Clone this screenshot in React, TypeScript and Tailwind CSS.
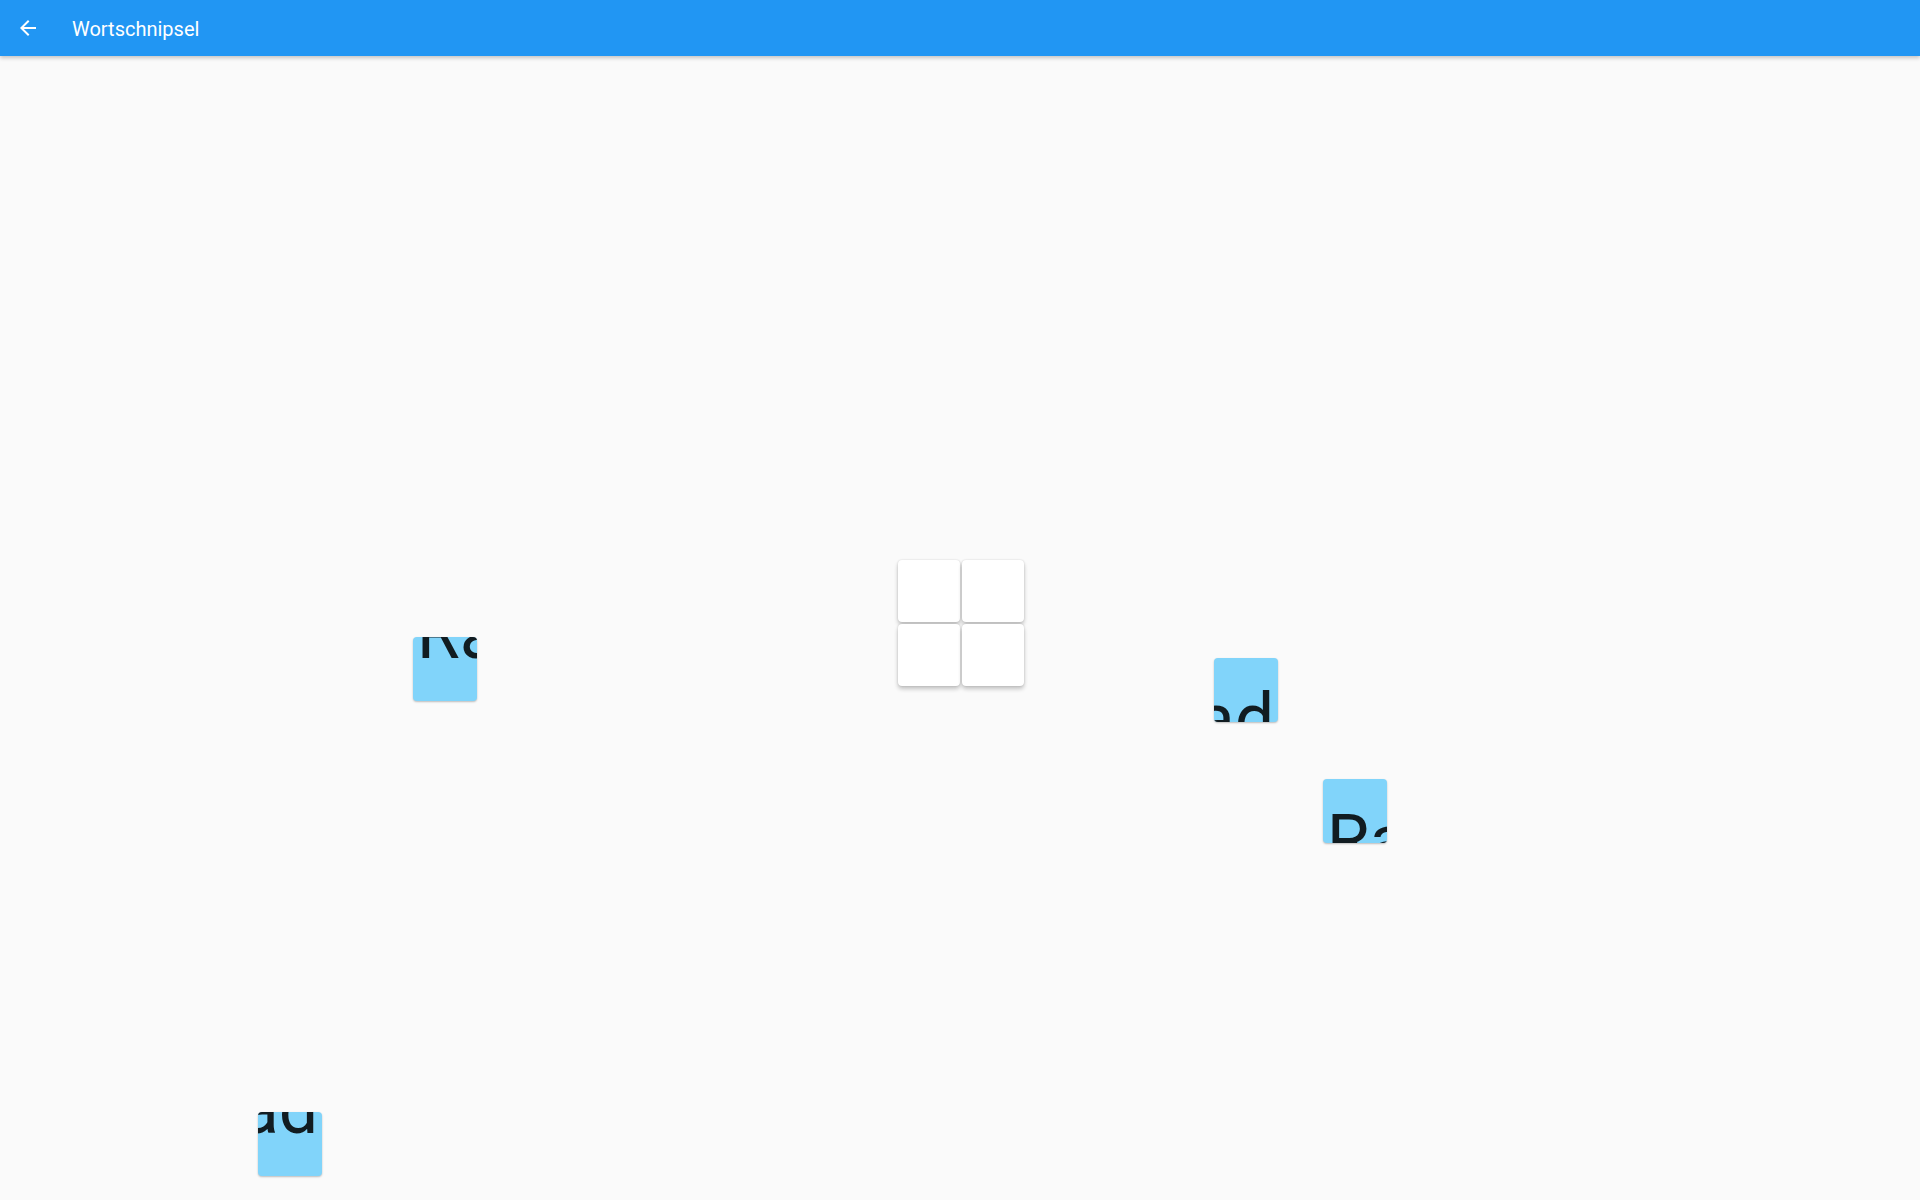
const WORD = "Rad";

const pieceClass =
  "absolute h-16 w-16 overflow-hidden rounded bg-[#81d4fa] shadow-[0_1px_2px_rgba(0,0,0,0.25)]";

type Quadrant = { col: 0 | 1; row: 0 | 1 };

function WordPiece({ col, row }: Quadrant) {
  return (
    <div
      className="absolute flex h-32 w-32 items-center justify-center pb-[6px] text-[70px] leading-none text-black/[0.87]"
      style={{ left: col * -64, top: row * -64 }}
    >
      {WORD}
    </div>
  );
}

type Piece = Quadrant & { x: number; y: number };

const pieces: Piece[] = [
  { col: 0, row: 1, x: 413, y: 581 },
  { col: 1, row: 0, x: 1214, y: 602 },
  { col: 0, row: 0, x: 1323, y: 723 },
  { col: 1, row: 1, x: 258, y: 1056 },
];

function TargetGrid() {
  return (
    <div className="grid grid-cols-[62px_62px] grid-rows-[62px_62px] gap-[2px]">
      {[0, 1, 2, 3].map((i) => (
        <div
          key={i}
          className="rounded bg-white shadow-[0_3px_4px_rgba(0,0,0,0.22),0_0_2px_rgba(0,0,0,0.16)]"
        />
      ))}
    </div>
  );
}

export default function App() {
  return (
    <div className="flex h-[1200px] w-[1920px] flex-col overflow-hidden bg-[#fafafa] font-['Roboto',sans-serif]">
      <header className="relative z-10 flex h-14 shrink-0 items-center bg-[#2196f3] shadow-[0_2px_4px_rgba(0,0,0,0.22)]">
        <button type="button" className="ml-4 flex h-6 w-6 items-center justify-center text-white" aria-label="Zurück">
          <svg viewBox="0 0 24 24" className="h-6 w-6" fill="currentColor">
            <path d="M20 11H7.83l5.59-5.59L12 4l-8 8 8 8 1.41-1.41L7.83 13H20v-2z" />
          </svg>
        </button>
        <h1 className="ml-8 pt-[2px] text-[20px] font-normal text-white">Wortschnipsel</h1>
      </header>

      <main className="relative flex-1">
        <div className="flex justify-center pt-[504px] pl-[1px]">
          <TargetGrid />
        </div>

        {pieces.map((p) => (
          <div key={`${p.col}-${p.row}`} className={pieceClass} style={{ left: p.x, top: p.y }}>
            <WordPiece col={p.col} row={p.row} />
          </div>
        ))}
      </main>
    </div>
  );
}
